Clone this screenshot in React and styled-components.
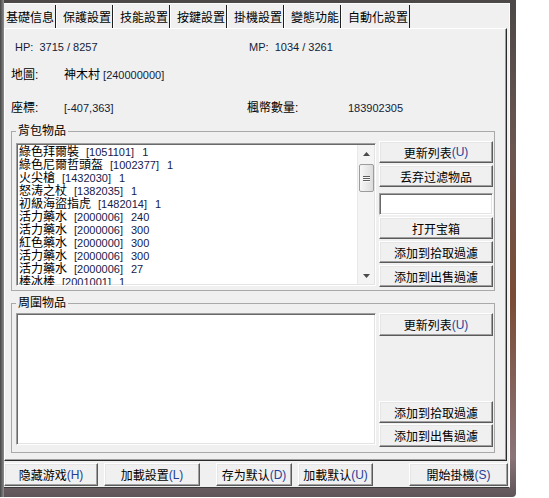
import React from 'react';
import styled, { createGlobalStyle } from 'styled-components';

const GlobalStyle = createGlobalStyle`
  html, body {
    margin: 0;
    padding: 0;
    background: #fff;
  }
  body {
    font-family: "Liberation Sans", "Noto Sans CJK TC", sans-serif;
    font-size: 12px;
    color: #000;
  }
  * {
    box-sizing: border-box;
  }
`;

const Frame = styled.div`
  width: 516px;
  height: 497px;
  padding: 3px 6px 9px 4px;
  display: flex;
  border-bottom-right-radius: 4px;
  background:
    linear-gradient(to right, #454545 0, #8e8e8e 4px, transparent 4px),
    linear-gradient(to bottom, #4c4848 0, #6b5650 30%, #7b4c36 60%, #8a7478 92%, #5e5458 100%);
`;

const Client = styled.div`
  flex: 1;
  display: flex;
  flex-direction: column;
  background: #f0f0f0;
  border-top: 1px solid #fbfbfb;
  border-right: 1px solid #fbfbfb;
  border-bottom: 1px solid #3a3a3a;
`;

const TabStrip = styled.div`
  height: 24px;
  padding-top: 1px;
  display: flex;
`;

const Tab = styled.div`
  height: 23px;
  display: flex;
  align-items: center;
  padding: 0 1px 0 ${(p) => (p.$active ? 1 : 6)}px;
  border-left: 1px solid ${(p) => (p.$active ? '#f0f0f0' : '#ffffff')};
  border-right: 1px solid #1e1e1e;
  font-size: 12px;
  white-space: nowrap;
`;

const Panel = styled.div`
  height: 433px;
  margin-right: 2px;
  padding: 11px 0 0 6px;
  border-top: 1px solid #ffffff;
  border-left: 1px solid #ffffff;
  border-right: 1px solid #2a2a2a;
  border-bottom: 1px solid #2a2a2a;
  box-shadow: inset -1px -1px 0 #a0a0a0;
`;

const InfoRow = styled.div`
  display: grid;
  grid-template-columns: 53px 183px 101px 1fr;
  height: 14px;
  margin-top: ${(p) => p.$mt || 0}px;
  line-height: 14px;
`;

const InfoCell = styled.span`
  grid-column: span ${(p) => p.$span || 1};
  padding-left: ${(p) => p.$indent || 0}px;
  font-size: ${(p) => (p.$cjk ? 12 : 11)}px;
  color: ${(p) => (p.$cjk ? '#000' : '#141c38')};
  white-space: pre;
`;

const GroupBox = styled.fieldset`
  width: 484px;
  margin: ${(p) => p.$mt}px 0 0 0;
  padding: 3px 1px ${(p) => p.$pb}px 4px;
  border: 1px solid #a9a9a9;
  min-width: 0;
`;

const Legend = styled.legend`
  padding: 0 2px;
  font-size: 12px;
  line-height: 14px;
`;

const GroupBody = styled.div`
  height: ${(p) => p.$h}px;
  display: grid;
  grid-template-columns: 360px 114px;
  column-gap: 3px;
`;

const ListBox = styled.div`
  height: ${(p) => p.$h}px;
  margin-top: ${(p) => p.$mt || 0}px;
  display: flex;
  background: #fff;
  border-top: 1px solid #a0a0a0;
  border-left: 1px solid #a0a0a0;
  border-right: 1px solid #ffffff;
  border-bottom: 1px solid #ffffff;
  box-shadow: inset 1px 1px 0 #696969, inset -1px -1px 0 #e3e3e3;
`;

const Items = styled.div`
  flex: 1;
  overflow: hidden;
  padding: 2px 0 0 2px;
`;

const ItemRow = styled.div`
  height: 13px;
  display: flex;
  align-items: center;
  white-space: nowrap;
`;

const ItemName = styled.span`
  font-size: 12px;
  line-height: 13px;
`;

const ItemCode = styled.span`
  margin-left: ${(p) => p.$gap}px;
  font-size: 11px;
  line-height: 13px;
  color: #15204a;
`;

const ScrollBar = styled.div`
  width: 17px;
  margin: 1px 1px 1px 0;
  display: flex;
  flex-direction: column;
  align-items: center;
  background: #f4f4f4;
  border-left: 1px solid #e8e8e8;
`;

const ArrowBox = styled.div`
  width: 16px;
  height: 17px;
  display: flex;
  align-items: center;
  justify-content: center;
`;

const Thumb = styled.div`
  width: 15px;
  height: 28px;
  margin-top: 2px;
  display: flex;
  flex-direction: column;
  align-items: center;
  justify-content: center;
  gap: 1px;
  border: 1px solid #9c9c9c;
  border-radius: 2px;
  background: linear-gradient(to right, #f7f7f7, #dcdcdc);
`;

const Grip = styled.span`
  width: 7px;
  height: 1px;
  background: #5e5e5e;
  box-shadow: 0 1px 0 #fafafa;
`;

const Spring = styled.div`
  flex: 1;
`;

const ButtonColumn = styled.div`
  display: flex;
  flex-direction: column;
  gap: ${(p) => p.$gap || 0}px;
`;

const Button = styled.button`
  height: ${(p) => p.$h || 22}px;
  width: ${(p) => (p.$w ? `${p.$w}px` : '100%')};
  margin-left: ${(p) => p.$ml || 0}px;
  margin-top: ${(p) => p.$mt || 0}px;
  padding: 0;
  display: flex;
  align-items: center;
  justify-content: center;
  font-family: "Liberation Sans", "Noto Sans CJK TC", sans-serif;
  font-size: 12px;
  color: #000;
  background: #f0f0f0;
  border: 1px solid;
  border-color: #ffffff #5a5a5a #5a5a5a #ffffff;
  box-shadow: inset -1px -1px 0 #a0a0a0, inset 1px 1px 0 #e6e6e6;
  white-space: nowrap;
`;

const Key = styled.span`
  color: #1f3f98;
`;

const TextInput = styled.div`
  height: 22px;
  margin: 4px 0 0;
  background: #fff;
  border-top: 1px solid #a0a0a0;
  border-left: 1px solid #a0a0a0;
  border-right: 1px solid #fff;
  border-bottom: 1px solid #fff;
  box-shadow: inset 1px 1px 0 #696969, inset -1px -1px 0 #e3e3e3;
`;

const ButtonBar = styled.div`
  height: 23px;
  margin-top: 2px;
  display: flex;
`;

const Arrow = ({ down }) => (
  <svg width="7" height="4" viewBox="0 0 7 4">
    <path d={down ? 'M0 0 L7 0 L3.5 4 Z' : 'M0 4 L3.5 0 L7 4 Z'} fill="#4a4a4a" />
  </svg>
);

const Label = ({ text, keyChar }) => (
  <>
    {text}
    <Key>({keyChar})</Key>
  </>
);

const tabs = ['基礎信息', '保護設置', '技能設置', '按鍵設置', '掛機設置', '變態功能', '自動化設置'];

const bagItems = [
  ['綠色拜爾裝', '1051101', '1'],
  ['綠色尼爾哲頭盔', '1002377', '1'],
  ['火尖槍', '1432030', '1'],
  ['怒涛之杖', '1382035', '1'],
  ['初級海盜指虎', '1482014', '1'],
  ['活力藥水', '2000006', '240'],
  ['活力藥水', '2000006', '300'],
  ['紅色藥水', '2000000', '300'],
  ['活力藥水', '2000006', '300'],
  ['活力藥水', '2000006', '27'],
  ['棒冰棒', '2001001', '1'],
];

const bottomButtons = [
  { text: '隐藏游戏', key: 'H', w: 94, ml: 0 },
  { text: '加載設置', key: 'L', w: 96, ml: 6 },
  { text: '存为默认', key: 'D', w: 76, ml: 16 },
  { text: '加載默认', key: 'U', w: 75, ml: 6 },
  { text: '開始掛機', key: 'S', w: 99, ml: 36 },
];

const Scroller = () => (
  <ScrollBar>
    <ArrowBox>
      <Arrow />
    </ArrowBox>
    <Thumb>
      <Grip />
      <Grip />
      <Grip />
    </Thumb>
    <Spring />
    <ArrowBox>
      <Arrow down />
    </ArrowBox>
  </ScrollBar>
);

export default function App() {
  return (
    <>
      <GlobalStyle />
      <Frame>
        <Client>
          <TabStrip>
            {tabs.map((t, i) => (
              <Tab key={t} $active={i === 0}>
                {t}
              </Tab>
            ))}
          </TabStrip>

          <Panel>
            <InfoRow>
              <InfoCell $span={2} $indent={4}>{'HP:  3715 / 8257'}</InfoCell>
              <InfoCell $span={2} $indent={2}>{'MP:  1034 / 3261'}</InfoCell>
            </InfoRow>
            <InfoRow $mt={14}>
              <InfoCell $cjk>地圖:</InfoCell>
              <InfoCell $span={3}>
                <InfoCell $cjk>神木村</InfoCell> [240000000]
              </InfoCell>
            </InfoRow>
            <InfoRow $mt={19}>
              <InfoCell $cjk>座標:</InfoCell>
              <InfoCell>[-407,363]</InfoCell>
              <InfoCell $cjk>楓幣數量:</InfoCell>
              <InfoCell>183902305</InfoCell>
            </InfoRow>

            <GroupBox $mt={9} $pb={3}>
              <Legend>背包物品</Legend>
              <GroupBody $h={146}>
                <ListBox $h={143} $mt={2}>
                  <Items>
                    {bagItems.map(([name, code, count], i) => (
                      <ItemRow key={i}>
                        <ItemName>{name}</ItemName>
                        <ItemCode $gap={7}>[{code}]</ItemCode>
                        <ItemCode $gap={8}>{count}</ItemCode>
                      </ItemRow>
                    ))}
                  </Items>
                  <Scroller />
                </ListBox>
                <ButtonColumn $gap={2}>
                  <Button>
                    <Label text="更新列表" keyChar="U" />
                  </Button>
                  <Button>丢弃过滤物品</Button>
                  <TextInput />
                  <Button>打开宝箱</Button>
                  <Button>添加到拾取過濾</Button>
                  <Button>添加到出售過濾</Button>
                </ButtonColumn>
              </GroupBody>
            </GroupBox>

            <GroupBox $mt={5} $pb={5}>
              <Legend>周圍物品</Legend>
              <GroupBody $h={134}>
                <ListBox $h={132}>
                  <Items />
                </ListBox>
                <ButtonColumn $gap={1}>
                  <Button $h={23}>
                    <Label text="更新列表" keyChar="U" />
                  </Button>
                  <Spring />
                  <Button $h={22}>添加到拾取過濾</Button>
                  <Button $h={23}>添加到出售過濾</Button>
                </ButtonColumn>
              </GroupBody>
            </GroupBox>
          </Panel>

          <ButtonBar>
            {bottomButtons.map((b) => (
              <Button key={b.text} $w={b.w} $ml={b.ml} $h={23}>
                <Label text={b.text} keyChar={b.key} />
              </Button>
            ))}
          </ButtonBar>
        </Client>
      </Frame>
    </>
  );
}
